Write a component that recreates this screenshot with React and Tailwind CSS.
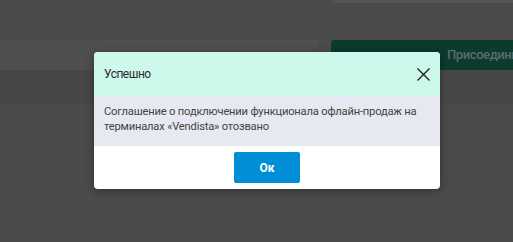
// Success dialog over a dimmed page
export default function App() {
  return (
    <div className="relative h-[242px] w-[513px] overflow-hidden bg-[#4b4b4b] font-['Roboto',sans-serif]">
      {/* Dimmed page underneath */}
      <div className="flex h-[40px] justify-end">
        <div className="h-[3px] w-[181px] bg-[#545454]" />
      </div>
      <div className="flex h-[30px] items-stretch">
        <div className="w-[318px] shrink-0 bg-[#4f4f4f]" />
        <div className="ml-[13px] flex min-w-0 flex-1 items-center overflow-hidden rounded-l-[3px] bg-[#0b3a2e] pl-[116px]">
          <span className="whitespace-nowrap text-[13px] font-medium tracking-[-0.4px] text-[#5f6b67]">Присоединиться</span>
        </div>
      </div>
      <div className="h-[35px] bg-[#474747]" />

      {/* Modal */}
      <div className="absolute left-[94px] top-[52px] w-[346px] overflow-hidden rounded-[4px] bg-white shadow-[0_2px_10px_rgba(0,0,0,0.35)]">
        <div className="flex h-[44px] items-center justify-between bg-[#cdf8ec] pl-[10px] pr-[10px]">
          <span className="text-[12px] tracking-[-0.5px] text-[#2b2b2b]">Успешно</span>
          <svg width="13" height="13" viewBox="0 0 13 13" className="text-[#1f1f1f]">
            <path d="M0.5 0.5 L12.5 12.5 M12.5 0.5 L0.5 12.5" stroke="currentColor" strokeWidth="1.4" />
          </svg>
        </div>
        <div className="h-[50px] whitespace-nowrap bg-[#e6e9f1] px-[10px] pt-[8px] text-[11.2px] leading-[15px] tracking-[-0.2px] text-[#444]">
          Соглашение о подключении функционала офлайн-продаж на
          <br />
          терминалах «Vendista» отозвано
        </div>
        <div className="flex h-[43px] justify-center pt-[6px]">
          <button className="h-[31px] w-[66px] rounded-[2px] bg-[#008fd6] text-[12px] font-bold text-white">
            Ок
          </button>
        </div>
      </div>
    </div>
  );
}
